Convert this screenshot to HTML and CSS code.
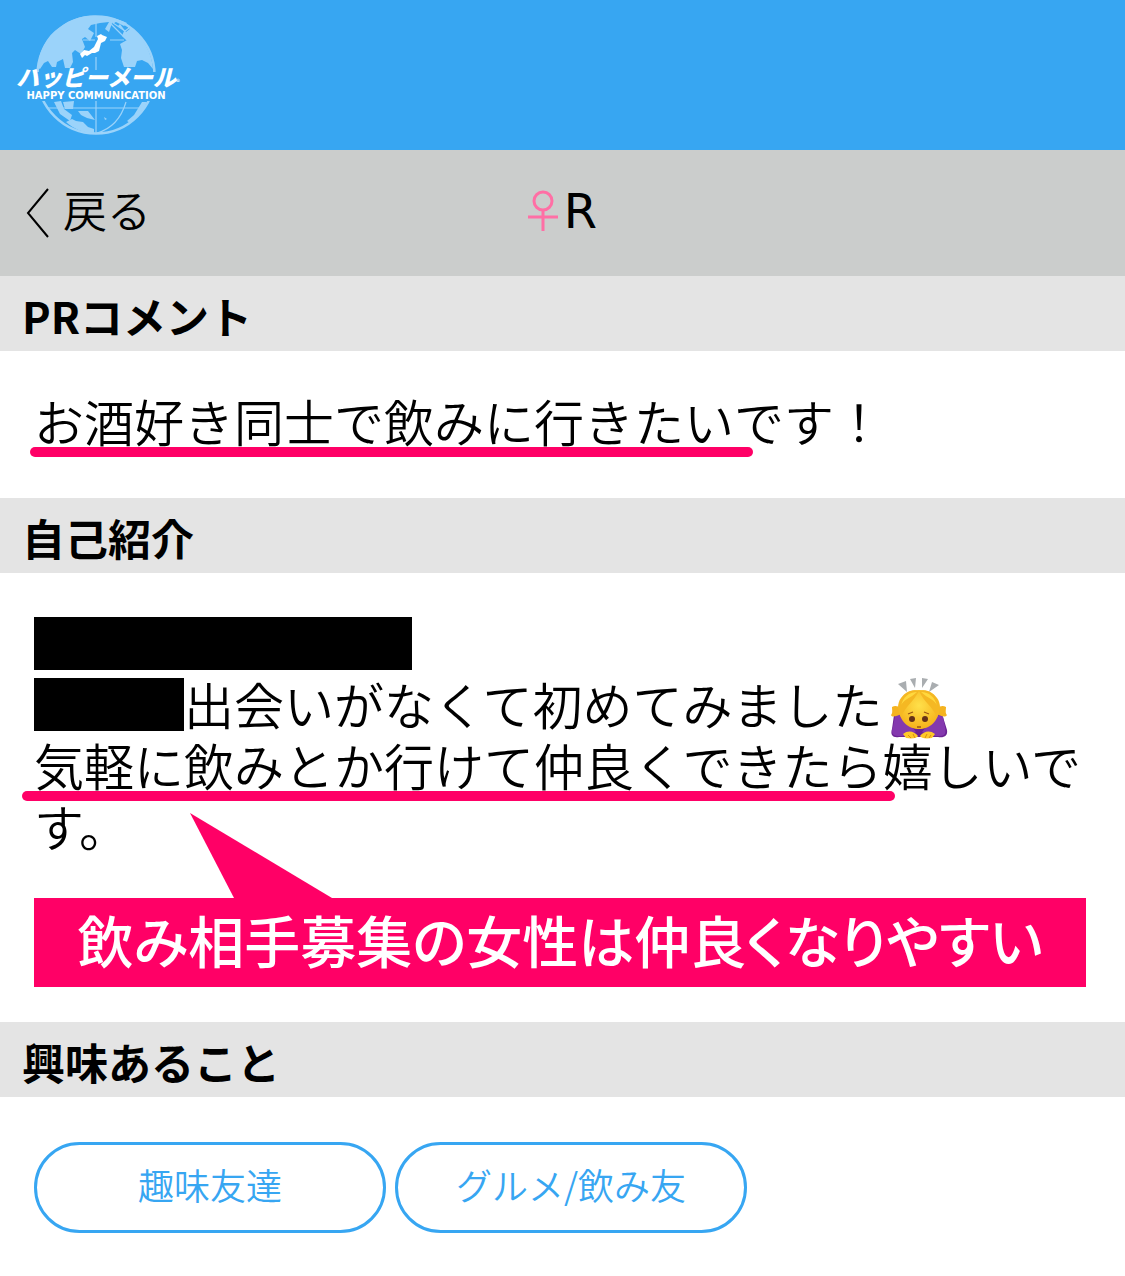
FILE: index.html
```
<!DOCTYPE html>
<html lang="ja">
<head>
    <meta charset="UTF-8">
    <meta name="viewport" content="width=device-width, initial-scale=1.0">
    <title>ハッピーメール</title>
    <link rel="stylesheet" href="styles.css">
</head>
<body>
    <header class="site-header">
        <a href="#" class="logo">
            <svg class="globe" viewBox="0 0 120 120" aria-hidden="true">
                <circle cx="60" cy="60" r="58.5" fill="none" stroke="#9bd3fa" stroke-width="2.5"/>
                <g fill="#9bd3fa">
                    <path d="M2 53C2 38 10 21 24 12C36 3 49 0 61 1C72 1 82 4 91 8L88 11L80 7L76 8L73 17L69 14L73 7L64 8L55 10L52 14L58 18L54 26L49 22L46 24L49 32L45 39L39 35L36 38L37 47L34 53H29L27 44L21 47L20 52H16L12 46L8 48L4 54Z"/>
                    <path d="M82 11L88 16L86 21L94 28L91 25L84 29L86 35L85 43L88 52H99L101 46L106 45L112 48L117 54C116 38 107 22 95 13L90 17L84 9Z"/>
                    <path d="M18 87L25 86L28 94L36 100L34 106L24 99ZM27 87L38 86L37 94L29 94ZM42 96L52 96L59 105L51 103L45 100ZM91 106L98 100L106 87L111 87C107 96 101 103 94 108ZM68 102L71 104L69 105Z"/>
                    <path d="M30 107L36 104L40 106L47 107L52 112L58 114V118C47 118 38 114 30 107Z"/>
                </g>
                <!-- band behind the name -->
                <path fill="#37a6f2" d="M0 57H120V86H0Z"/>
                <g fill="none" stroke="#9bd3fa" stroke-width="1.2">
                    <path d="M60 8V22M60 42V55M60 86V119M12 93H108M47 25H59M74 25H88M89 38V52M90 87C85 104 75 114 61 118M74 8L91 25M77 8C82 3 91 8 93 13L89 16Z"/>
                </g>
                <path fill="#fff" d="M44 39L48 35L53 36L58 32L62 24L61 21L65 19L66 20L71 22L69 26L65 28L63 36L59 38L56 38L51 41L49 40L46 43Z"/>
            </svg>
            <span class="logo-text">
                <span class="logo-name">ハッピーメール<small>®</small></span>
                <span class="logo-sub">HAPPY COMMUNICATION</span>
            </span>
        </a>
    </header>

    <nav class="page-nav">
        <a href="#" class="back">
            <svg class="chevron" viewBox="0 0 24 50" aria-hidden="true"><path d="M22 1L2 25L22 49"/></svg>
            <span>戻る</span>
        </a>
        <h1>
            <svg class="female" viewBox="0 0 30 42" role="img" aria-label="女性"><circle cx="15" cy="11" r="9"/><path d="M15 20V41M0 27H30"/></svg>
            R
        </h1>
    </nav>

    <main>
        <section>
            <h2>PRコメント</h2>
            <div class="content">
                <p><span class="marked marked-pr">お酒好き同士で飲みに行きたい</span>です！</p>
            </div>
        </section>

        <section>
            <h2>自己紹介</h2>
            <div class="content intro">
                <p>
                    <span class="redacted redacted-long"></span><br>
                    <span class="redacted redacted-short"></span>出会いがなくて初めてみました<svg class="emoji" viewBox="0 0 60 62" role="img" aria-label="お辞儀">
                        <defs>
                            <radialGradient id="skin" cx="50%" cy="40%" r="60%">
                                <stop offset="0" stop-color="#ffe04a"/>
                                <stop offset="1" stop-color="#f6b21b"/>
                            </radialGradient>
                        </defs>
                        <path fill="#a9adb0" d="M9 6L17 3L18 14ZM21 1L27 0L26 10ZM33 0L39 1L33 10ZM43 4L50 7L40 14Z"/>
                        <path fill="#6b2393" d="M5 37C10 32 17 34 20 40L42 40C46 32 52 34 54 39L58 52C59 58 55 60 49 59H10C4 60 1 57 3 51Z"/>
                        <path fill="#8439ae" d="M6 38C11 34 16 38 18 43L27 54L18 58H9C3 58 2 54 4 49ZM54 39C49 35 45 38 42 43L33 54L42 58H51C57 58 57 54 56 49Z"/>
                        <path fill="#f5b320" d="M3 29C6 27 9 28 12 30V36C8 38 3 40 2 37C4 35 3 32 3 29ZM57 29C54 27 51 28 48 30V36C52 38 56 40 58 37C56 35 57 32 57 29Z"/>
                        <path fill="url(#skin)" d="M10 30C10 18 19 12 30 12C41 12 50 18 50 30C50 44 40 51 30 51C20 51 10 44 10 30Z"/>
                        <path fill="#f5b823" d="M30 13C24 24 17 28 12 39C8 34 8 25 12 20C17 13 24 11 30 13ZM30 13C35 24 43 28 48 39C52 34 52 25 48 20C43 13 36 11 30 13Z"/>
                        <path fill="#ffd83e" d="M28 14C22 20 13 22 12 28C14 19 20 14 28 14ZM32 14C38 20 47 22 48 28C46 19 40 14 32 14Z"/>
                        <circle cx="23" cy="41" r="3" fill="#653117"/>
                        <circle cx="36" cy="41" r="3" fill="#653117"/>
                        <path d="M19 36L24 34M35 34L40 36M28 49H32" fill="none" stroke="#9a5515" stroke-width="1.3"/>
                        <path fill="#ffc928" d="M14 56C19 52 25 53 29 58C28 60 24 61 17 60ZM46 56C41 52 35 53 31 58C32 60 36 61 43 60Z"/>
                        <path d="M19 57L22 60M24 56L26 60M36 60L38 56M40 60L42 57" stroke="#d98b16" stroke-width="1"/>
                    </svg><br>
                    <span class="marked marked-intro">気軽に飲みとか行けて仲良くできたら</span>嬉しいです。
                </p>
                <div class="callout">
                    <svg class="callout-tail" viewBox="0 0 142 85" aria-hidden="true"><path d="M0 0L142 85H44Z"/></svg>
                    飲み相手募集の女性は仲良くなりやすい
                </div>
            </div>
        </section>

        <section>
            <h2>興味あること</h2>
            <div class="content tags">
                <a href="#" class="tag">趣味友達</a>
                <a href="#" class="tag">グルメ/飲み友</a>
            </div>
        </section>
    </main>
</body>
</html>
```

FILE: styles.css
```
* {
    box-sizing: border-box;
}

body {
    margin: 0;
    background-color: #fff;
    color: #000;
    font-family: "Noto Sans CJK JP", sans-serif;
    font-weight: 350;
}

a {
    color: inherit;
    text-decoration: none;
}

.site-header {
    display: flex;
    align-items: center;
    height: 150px;
    padding: 0 16px;
    background-color: #37a6f2;
}

/* logo text sits over the globe */
.logo {
    display: grid;
    place-items: center;
    width: 160px;
    color: #fff;
}

.globe {
    grid-area: 1 / 1;
    width: 120px;
    height: 120px;
}

.logo-text {
    grid-area: 1 / 1;
    position: relative;
    display: flex;
    flex-direction: column;
    align-items: center;
    gap: 4px;
    padding-top: 18px;
    white-space: nowrap;
}

.logo-name {
    position: relative;
    font-size: 23px;
    font-style: italic;
    font-weight: 900;
    line-height: 20px;
}

.logo-name small {
    position: absolute;
    left: 100%;
    bottom: -6px;
    font-size: 8px;
    font-style: normal;
    font-weight: 400;
}

.logo-sub {
    font-family: "DejaVu Sans", sans-serif;
    font-size: 10px;
    font-weight: 700;
    line-height: 12px;
}

.page-nav {
    display: grid;
    grid-template-columns: 1fr auto 1fr;
    align-items: center;
    height: 126px;
    padding: 0 26px;
    background-color: #cbcdcc;
}

.back {
    display: flex;
    align-items: center;
    gap: 13px;
    font-size: 44px;
    line-height: 60px;
}

.back span {
    padding-bottom: 8px;
}

.chevron {
    width: 24px;
    height: 50px;
    fill: none;
    stroke: #000;
    stroke-width: 2;
}

.page-nav h1 {
    display: flex;
    align-items: center;
    gap: 6px;
    margin: 0;
    padding-bottom: 4px;
    font-family: "DejaVu Sans", sans-serif;
    font-size: 48px;
    font-weight: 400;
    line-height: 60px;
}

.female {
    width: 30px;
    height: 42px;
    fill: none;
    stroke: #ff6fa5;
    stroke-width: 3;
}

h2 {
    margin: 0;
    padding: 8px 22px 5px;
    background-color: #e4e4e4;
    font-size: 43px;
    font-weight: 700;
    line-height: 62px;
}

.content {
    padding: 39px 39px 47px 34px;
}

.content p {
    margin: 0;
    font-size: 50px;
    line-height: 61px;
}

.content.intro {
    padding-bottom: 35px;
}

.marked {
    position: relative;
}

.marked::after {
    content: "";
    position: absolute;
    bottom: -1px;
    height: 10px;
    border-radius: 5px;
    background-color: #ff0066;
}

.marked-pr::after {
    left: -4px;
    right: -19px;
}

.marked-intro::after {
    left: -12px;
    right: -12px;
}

.redacted {
    display: inline-block;
    height: 53px;
    margin-top: 5px;
    background-color: #000;
    vertical-align: top;
}

.redacted-long {
    width: 378px;
}

.redacted-short {
    width: 150px;
}

.emoji {
    width: 60px;
    height: 62px;
    margin: 5px 0 -6px 6px;
    vertical-align: top;
}

.callout {
    position: relative;
    margin-top: 42px;
    padding-bottom: 7px;
    background-color: #ff0066;
    color: #fff;
    font-size: 56px;
    font-weight: 500;
    font-feature-settings: "palt";
    line-height: 82px;
    text-align: center;
}

.callout-tail {
    position: absolute;
    left: 156px;
    bottom: 100%;
    width: 142px;
    height: 85px;
    fill: #ff0066;
}

.tags {
    display: flex;
    flex-wrap: wrap;
    gap: 9px;
    padding-top: 45px;
}

.tag {
    width: 352px;
    padding-bottom: 6px;
    border: 3px solid #37a6f2;
    border-radius: 46px;
    color: #37a6f2;
    font-size: 36px;
    line-height: 79px;
    text-align: center;
}
```
